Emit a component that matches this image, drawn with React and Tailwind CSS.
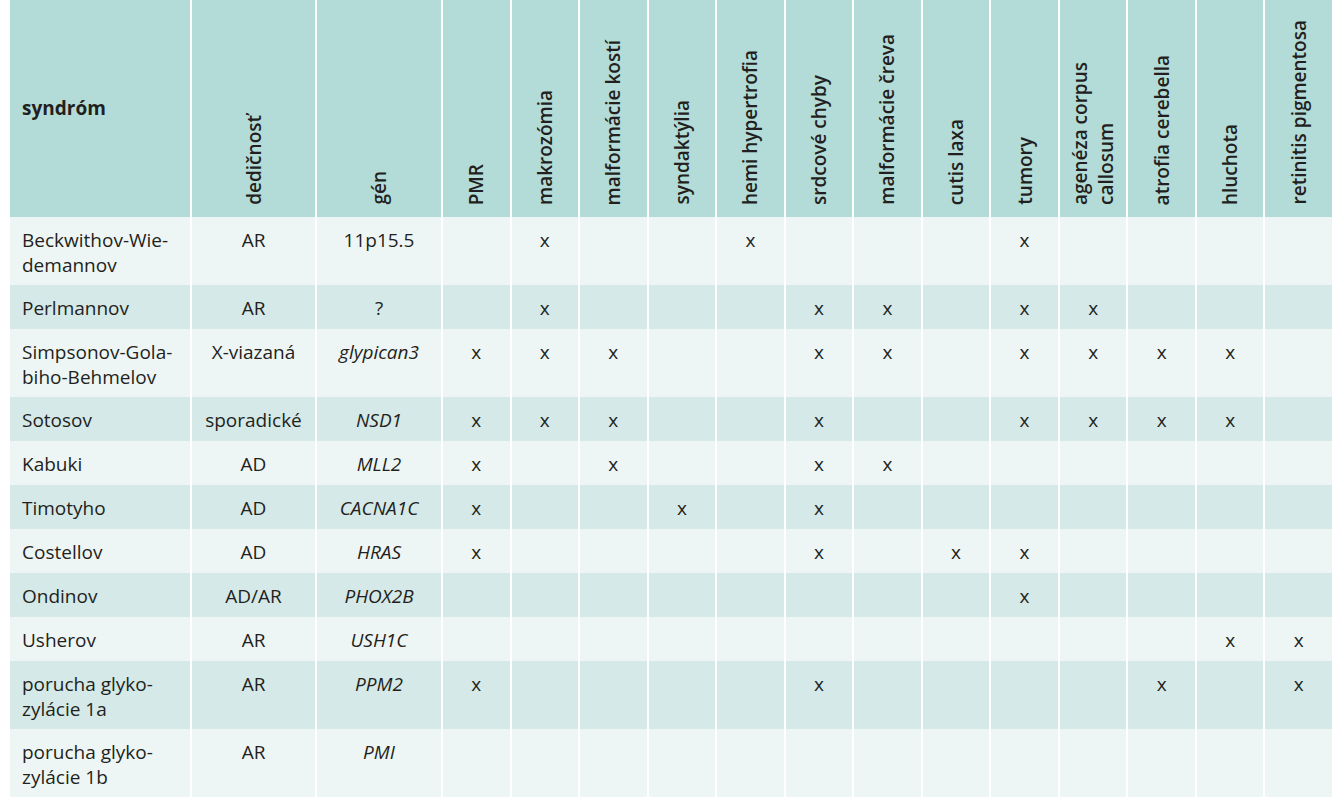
const features = [
  "PMR",
  "makrozómia",
  "malformácie kostí",
  "syndaktýlia",
  "hemi hypertrofia",
  "srdcové chyby",
  "malformácie čreva",
  "cutis laxa",
  "tumory",
  ["agenéza corpus", "callosum"],
  "atrofia cerebella",
  "hluchota",
  "retinitis pigmentosa",
];

const rows = [
  { name: ["Beckwithov-Wie-", "demannov"], inh: "AR", gene: "11p15.5", plain: true, marks: [1, 4, 8] },
  { name: ["Perlmannov"], inh: "AR", gene: "?", plain: true, marks: [1, 5, 6, 8, 9] },
  { name: ["Simpsonov-Gola-", "biho-Behmelov"], inh: "X-viazaná", gene: "glypican3", marks: [0, 1, 2, 5, 6, 8, 9, 10, 11] },
  { name: ["Sotosov"], inh: "sporadické", gene: "NSD1", marks: [0, 1, 2, 5, 8, 9, 10, 11] },
  { name: ["Kabuki"], inh: "AD", gene: "MLL2", marks: [0, 2, 5, 6] },
  { name: ["Timotyho"], inh: "AD", gene: "CACNA1C", marks: [0, 3, 5] },
  { name: ["Costellov"], inh: "AD", gene: "HRAS", marks: [0, 5, 7, 8] },
  { name: ["Ondinov"], inh: "AD/AR", gene: "PHOX2B", marks: [8] },
  { name: ["Usherov"], inh: "AR", gene: "USH1C", marks: [11, 12] },
  { name: ["porucha glyko-", "zylácie 1a"], inh: "AR", gene: "PPM2", marks: [0, 5, 10, 12] },
  { name: ["porucha glyko-", "zylácie 1b"], inh: "AR", gene: "PMI", marks: [] },
];

const grid = "grid grid-cols-[180px_123px_124px_repeat(13,minmax(0,1fr))] gap-x-[2px]";

const VerticalLabel = ({ text }) => (
  <div className="bg-[#b3dcd8] flex items-end justify-center pb-[12px]">
    <span className="[writing-mode:vertical-rl] rotate-180 font-semibold leading-[26px] whitespace-nowrap">
      {Array.isArray(text) ? (
        <>
          {text[0]}
          <br />
          {text[1]}
        </>
      ) : (
        text
      )}
    </span>
  </div>
);

export default function App() {
  return (
    <div className="bg-white min-h-[800px] pl-[10px] font-['Open_Sans',sans-serif] text-[19px] text-[#231f20]">
      <div className="w-[1322px]">
        {/* header */}
        <div className={`${grid} h-[217px]`}>
          <div className="bg-[#b3dcd8] flex items-center pl-[12px] font-bold">syndróm</div>
          <VerticalLabel text="dedičnosť" />
          <VerticalLabel text="gén" />
          {features.map((f, i) => (
            <VerticalLabel key={i} text={f} />
          ))}
        </div>

        {rows.map((r, ri) => {
          const bg = ri % 2 === 0 ? "bg-[#eef6f5]" : "bg-[#d5e9e8]";
          const h = r.name.length > 1 ? "h-[68px]" : "h-[44px]";
          return (
            <div key={ri} className={`${grid} ${h}`}>
              <div className={`${bg} pl-[12px] pt-[11px] leading-[25px]`}>
                {r.name.map((n, k) => (
                  <div key={k}>{n}</div>
                ))}
              </div>
              <div className={`${bg} text-center pt-[11px] leading-[25px]`}>{r.inh}</div>
              <div className={`${bg} text-center pt-[11px] leading-[25px] ${r.plain ? "" : "italic"}`}>{r.gene}</div>
              {features.map((_, ci) => (
                <div key={ci} className={`${bg} text-center pt-[11px] leading-[25px]`}>
                  {r.marks.includes(ci) ? "x" : ""}
                </div>
              ))}
            </div>
          );
        })}
      </div>
    </div>
  );
}
